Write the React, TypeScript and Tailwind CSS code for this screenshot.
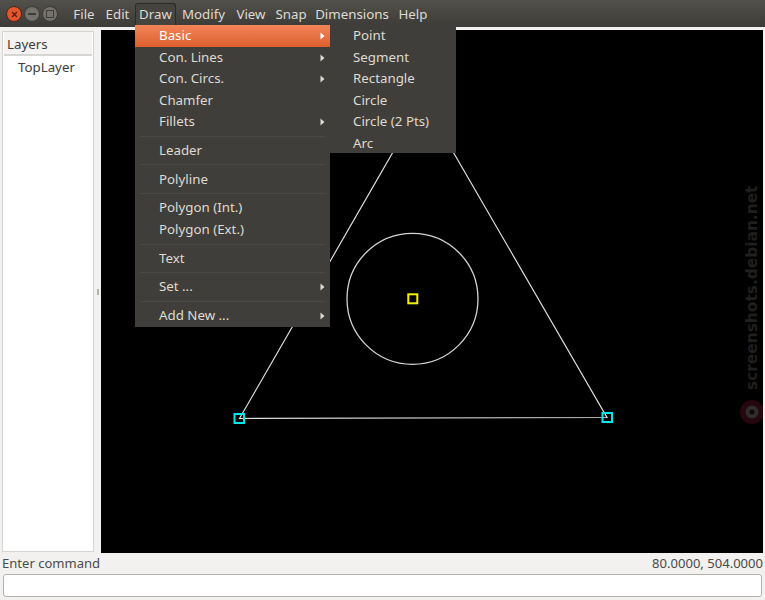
const font = { fontFamily: '"Noto Sans", sans-serif' }

const menuBar = [
  { label: 'File', cls: 'w-[32px]' },
  { label: 'Edit', cls: 'w-[35px]' },
  { label: 'Draw', cls: 'w-[41px]', active: true },
  { label: 'Modify', cls: 'w-[55px]' },
  { label: 'View', cls: 'w-[40px]' },
  { label: 'Snap', cls: 'w-[40px]' },
  { label: 'Dimensions', cls: 'w-[82px]' },
  { label: 'Help', cls: 'w-[40px]' },
]

type Entry = { label?: string; sub?: boolean; active?: boolean; sep?: boolean }

const drawMenu: Entry[] = [
  { label: 'Basic', sub: true, active: true },
  { label: 'Con. Lines', sub: true },
  { label: 'Con. Circs.', sub: true },
  { label: 'Chamfer' },
  { label: 'Fillets', sub: true },
  { sep: true },
  { label: 'Leader' },
  { sep: true },
  { label: 'Polyline' },
  { sep: true },
  { label: 'Polygon (Int.)' },
  { label: 'Polygon (Ext.)' },
  { sep: true },
  { label: 'Text' },
  { sep: true },
  { label: 'Set ...', sub: true },
  { sep: true },
  { label: 'Add New ...', sub: true },
]

const basicMenu = ['Point', 'Segment', 'Rectangle', 'Circle', 'Circle (2 Pts)', 'Arc']

function Arrow() {
  return (
    <svg width="5" height="8" viewBox="0 0 5 8" className="absolute right-[5px] top-[7px]">
      <path d="M0.5 0.5 L4.5 4 L0.5 7.5 Z" fill="currentColor" />
    </svg>
  )
}

function DrawMenu() {
  return (
    <div className="absolute left-[135px] top-[25px] w-[195px] h-[302px] overflow-hidden bg-[#3f3e3a] text-[#dfdbd2] z-20">
      {drawMenu.map((m, i) =>
        m.sep ? (
          <div key={i} className="h-[7.3px] flex items-center px-[5px]">
            <div className="h-px w-full bg-[#4a4945]" />
          </div>
        ) : (
          <div
            key={i}
            className={
              m.active
                ? 'relative h-[21.5px] pl-[24px] leading-[20.5px] text-white bg-gradient-to-b from-[#f28559] to-[#dd5f2c]'
                : 'relative h-[21.5px] pl-[24px] leading-[20.5px]'
            }
          >
            {m.label}
            {m.sub && <Arrow />}
          </div>
        )
      )}
    </div>
  )
}

function BasicMenu() {
  return (
    <div className="absolute left-[330px] top-[25px] w-[125.5px] h-[128px] overflow-hidden bg-[#3f3e3a] text-[#dfdbd2] z-20">
      {basicMenu.map((m) => (
        <div key={m} className="h-[21.5px] pl-[23px] leading-[20.5px] whitespace-nowrap">
          {m}
        </div>
      ))}
    </div>
  )
}

function WindowButtons() {
  return (
    <div className="flex items-start w-[68px] pl-[6px] pt-[6px] gap-[2px]">
      <div className="w-[16px] h-[16px] rounded-full bg-[#e8552a] border border-[#3a2a20] flex items-center justify-center">
        <svg width="7" height="7" viewBox="0 0 7 7">
          <path d="M1 1 L6 6 M6 1 L1 6" stroke="#5a1f0c" strokeWidth="1.4" />
        </svg>
      </div>
      <div className="w-[16px] h-[16px] rounded-full bg-[#74726b] border border-[#3a3934] flex items-center justify-center">
        <div className="w-[8px] h-[2px] bg-[#3e3d39]" />
      </div>
      <div className="w-[16px] h-[16px] rounded-full bg-[#74726b] border border-[#3a3934] flex items-center justify-center">
        <div className="w-[8px] h-[8px] border border-[#3e3d39]" />
      </div>
    </div>
  )
}

function Drawing() {
  // canvas origin sits at page (101,30)
  return (
    <svg viewBox="0 0 662 523" className="block w-full h-full" fill="none">
      <path d="M138.5 388.5 L322 70 L506 387.5 Z" stroke="#dedede" strokeWidth="1.2" />
      <circle cx="311.5" cy="268.8" r="65.5" stroke="#d4d4d4" strokeWidth="1.3" />
      <rect x="307.3" y="264.3" width="9" height="9" stroke="#f5f000" strokeWidth="2" />
      <rect x="133.5" y="384" width="9.5" height="9" stroke="#00e8ec" strokeWidth="2" />
      <rect x="501.5" y="383" width="9.5" height="9" stroke="#00e8ec" strokeWidth="2" />
      <text
        transform="translate(656 360) rotate(-90)"
        fill="#1f1f1f"
        fontSize="15.4"
        fontWeight="700"
        fontFamily='"DejaVu Sans", sans-serif'
      >
        screenshots.debian.net
      </text>
      <circle cx="651" cy="382" r="12" fill="#26060f" />
      <circle cx="651" cy="382" r="6.5" fill="#2e2e2e" />
      <circle cx="651" cy="382" r="2.5" fill="#16080a" />
    </svg>
  )
}

export default function App() {
  return (
    <div style={font} className="relative w-[765px] h-[600px] overflow-hidden bg-[#f2f1f0] text-[13.3px] flex flex-col">
      <div className="h-[27px] shrink-0 flex bg-gradient-to-b from-[#53514b] to-[#3c3b37] text-[#dfdbd2]">
        <WindowButtons />
        <div className="flex pt-[3px]">
          {menuBar.map((m) => (
            <div
              key={m.label}
              className={
                m.active
                  ? `${m.cls} h-[23px] leading-[21px] text-center border border-b-0 border-[#2c2b27] rounded-t-[3px] bg-[#45443f]`
                  : `${m.cls} h-[23px] leading-[22px] text-center`
              }
            >
              {m.label}
            </div>
          ))}
        </div>
      </div>

      <div className="flex-1 flex min-h-0 pt-[3px]">
        <div className="w-[92px] ml-[2px] mt-[1px] mb-[2px] bg-white border border-[#d6d4d1] text-[#3c3c3c]">
          <div className="h-[24px] mx-px bg-[#f4f3f2] border-b-2 border-[#d8d6d3] pl-[3px] pt-[2px] leading-[20px]">
            Layers
          </div>
          <div className="pl-[15px] pt-px leading-[20px]">TopLayer</div>
        </div>
        <div className="w-[7px] flex items-center justify-center">
          <div className="w-[2px] h-[6px] border-x border-[#b5b3b0]" />
        </div>
        <div className="flex-1 bg-black mr-[2px] mb-px">
          <Drawing />
        </div>
      </div>

      <div className="h-[20px] shrink-0 flex justify-between px-[2px] text-[13.05px] text-[#4a4a4a] leading-[19px]">
        <span>Enter command</span>
        <span>80.0000, 504.0000</span>
      </div>
      <div className="h-[26px] shrink-0 px-[3px] pb-[3px]">
        <div className="h-[23px] rounded-[3px] bg-white border border-[#b5b2ac]" />
      </div>

      <DrawMenu />
      <BasicMenu />
    </div>
  )
}
